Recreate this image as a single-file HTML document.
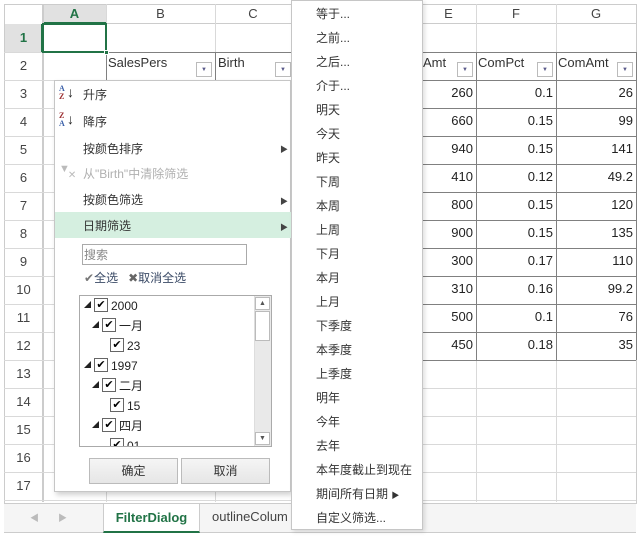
<!DOCTYPE html>
<html><head><meta charset="utf-8"><style>
*{box-sizing:border-box;margin:0;padding:0}
body{width:642px;height:536px;overflow:hidden;background:#fff;position:relative;font-family:"Segoe UI","Liberation Sans","Noto Sans CJK SC",sans-serif;font-size:13px;color:#333}
.a{position:absolute}
.hl{position:absolute;height:1px;background:#d9d9d9}
.vl{position:absolute;width:1px;background:#d9d9d9}
.rh{position:absolute;left:4px;width:39px;text-align:center;font-size:13px;color:#444}
.ch{position:absolute;top:4px;height:20px;text-align:center;line-height:20px;color:#444}
.num{position:absolute;text-align:right;font-size:13px;color:#222}
.fb{position:absolute;width:16px;height:15px;border:1px solid #bbb;background:#fff;font-size:6px;color:#5a5a8a;text-align:center;line-height:14px}
.mi{position:absolute;left:83px;font-size:12px;color:#333}
.arr{position:absolute;left:280px;font-size:8px;color:#444}
.si{position:absolute;left:316px;font-size:12px;color:#333}
.cb{display:inline-block;width:14px;height:14px;border:1px solid #666;background:#fff;font-size:11px;line-height:12px;text-align:center;vertical-align:top;margin-right:3px;color:#000}
.tr{position:absolute;font-size:12px;line-height:16px;height:16px;color:#222;white-space:nowrap}
.tri{display:inline-block;font-size:7px;width:10px;color:#222;vertical-align:top;line-height:16px}
</style></head><body>
<div class="a" style="left:4px;top:4px;width:632px;height:20px;background:#fff;border-bottom:1px solid #ccc"></div>
<div class="a" style="left:4px;top:4px;width:39px;height:498px;background:#fff;border-right:1px solid #ccc"></div>
<div class="a" style="left:43px;top:4px;width:63px;height:20px;background:#e1e1e1;border-bottom:2px solid #217346"></div>
<div class="a" style="left:4px;top:24px;width:39px;height:28px;background:#e1e1e1;border-right:2px solid #217346"></div>
<div class="a" style="left:4px;top:4px;width:632px;height:1px;background:#ccc"></div>
<div class="a" style="left:4px;top:4px;width:1px;height:500px;background:#ccc"></div>
<div class="a" style="left:636px;top:4px;width:1px;height:500px;background:#ccc"></div>
<div class="ch" style="left:43px;width:63px;color:#217346;font-weight:bold">A</div>
<div class="ch" style="left:106px;width:109px">B</div>
<div class="ch" style="left:215px;width:76px">C</div>
<div class="ch" style="left:421px;width:55px">E</div>
<div class="ch" style="left:476px;width:80px">F</div>
<div class="ch" style="left:556px;width:80px">G</div>
<div class="vl" style="left:43px;top:4px;height:498px;background:#ccc"></div>
<div class="vl" style="left:106px;top:4px;height:498px"></div>
<div class="vl" style="left:215px;top:4px;height:498px"></div>
<div class="vl" style="left:476px;top:4px;height:498px"></div>
<div class="vl" style="left:556px;top:4px;height:498px"></div>
<div class="vl" style="left:421px;top:4px;height:498px"></div>
<div id="rows"></div>
<script>
var h='';for(var i=1;i<=17;i++){var t=24+(i-1)*28;h+='<div class="hl" style="left:4px;width:632px;top:'+(t+28)+'px"></div><div class="rh" style="top:'+(t+6)+'px;'+(i==1?'color:#217346;font-weight:bold':'')+'">'+i+'</div>';}
document.getElementById('rows').outerHTML=h;
</script>
<div class="a" style="left:106px;top:52px;width:530px;height:1px;background:#808080"></div>
<div class="a" style="left:106px;top:80px;width:530px;height:1px;background:#808080"></div>
<div class="a" style="left:106px;top:52px;width:1px;height:28px;background:#808080"></div>
<div class="a" style="left:215px;top:52px;width:1px;height:28px;background:#808080"></div>
<div class="a" style="left:421px;top:52px;width:1px;height:308px;background:#808080"></div>
<div class="a" style="left:476px;top:52px;width:1px;height:308px;background:#808080"></div>
<div class="a" style="left:556px;top:52px;width:1px;height:308px;background:#808080"></div>
<div class="a" style="left:636px;top:52px;width:1px;height:308px;background:#808080"></div>
<div id="tb"></div>
<script>
var d=[[260,'0.1',26],[660,'0.15',99],[940,'0.15',141],[410,'0.12','49.2'],[800,'0.15',120],[900,'0.15',135],[300,'0.17',110],[310,'0.16','99.2'],[500,'0.1',76],[450,'0.18',35]];
var s='';for(var i=0;i<10;i++){var t=80+i*28;s+='<div class="a" style="left:421px;top:'+(t+28)+'px;width:215px;height:1px;background:#808080"></div>';
s+='<div class="num" style="left:421px;width:52px;top:'+(t+5)+'px">'+d[i][0]+'</div><div class="num" style="left:476px;width:77px;top:'+(t+5)+'px">'+d[i][1]+'</div><div class="num" style="left:556px;width:77px;top:'+(t+5)+'px">'+d[i][2]+'</div>';}
document.getElementById('tb').outerHTML=s;
</script>
<div class="a" style="left:108px;top:55px">SalesPers</div>
<div class="fb" style="left:196px;top:62px">▼</div>
<div class="a" style="left:218px;top:55px">Birth</div>
<div class="fb" style="left:275px;top:62px">▼</div>
<div class="a" style="left:423px;top:55px">Amt</div>
<div class="fb" style="left:457px;top:62px">▼</div>
<div class="a" style="left:478px;top:55px">ComPct</div>
<div class="fb" style="left:537px;top:62px">▼</div>
<div class="a" style="left:558px;top:55px">ComAmt</div>
<div class="fb" style="left:617px;top:62px">▼</div>
<div class="a" style="left:42px;top:23px;width:65px;height:30px;border:2px solid #217346"></div>
<div class="a" style="left:104px;top:50px;width:5px;height:5px;background:#217346;border:1px solid #fff"></div>
<div class="a" style="left:4px;top:503px;width:632px;height:30px;background:#f5f5f5;border-top:1px solid #ccc;border-bottom:1px solid #ccc"></div>
<div class="a" style="left:30px;top:511px;font-size:9px;color:#bbb">◀</div>
<div class="a" style="left:58px;top:511px;font-size:9px;color:#bbb">▶</div>
<div class="a" style="left:103px;top:504px;width:97px;height:29px;background:#fff;border-left:1px solid #ccc;border-right:1px solid #ccc;border-bottom:2px solid #217346;text-align:center;line-height:27px;font-weight:bold;color:#217346;font-size:13px">FilterDialog</div>
<div class="a" style="left:212px;top:509px;font-size:13px;color:#444">outlineColum</div>
<div class="a" style="left:54px;top:80px;width:237px;height:412px;background:#fff;border:1px solid #c6c6c6;box-shadow:2px 3px 5px rgba(0,0,0,.18)"></div>
<div class="a" style="left:55px;top:212px;width:236px;height:26px;background:#d5efe0"></div>
<div class="a" style="left:59px;top:85px;font:bold 8px/8px 'Liberation Serif',serif;color:#3a5fa8">A<br><span style="color:#9b2d30">Z</span></div>
<div class="a" style="left:67px;top:84px;font-size:14px;color:#222">↓</div>
<div class="a" style="left:59px;top:112px;font:bold 8px/8px 'Liberation Serif',serif;color:#9b2d30">Z<br><span style="color:#3a5fa8">A</span></div>
<div class="a" style="left:67px;top:111px;font-size:14px;color:#222">↓</div>
<div class="a" style="left:59px;top:163px;font-size:11px;color:#bbb">▼<span style="font-size:10px;position:relative;top:6px;left:-2px">✕</span></div>
<div class="mi" style="top:86px">升序</div>
<div class="mi" style="top:113px">降序</div>
<div class="mi" style="top:140px">按颜色排序</div>
<div class="arr" style="top:144px">▶</div>
<div class="mi" style="top:165px;color:#b0b0b0">从"Birth"中清除筛选</div>
<div class="mi" style="top:191px">按颜色筛选</div>
<div class="arr" style="top:196px">▶</div>
<div class="mi" style="top:217px">日期筛选</div>
<div class="arr" style="top:222px">▶</div>
<div class="a" style="left:82px;top:244px;width:165px;height:21px;border:1px solid #aaa;font-size:12px;color:#888;padding:1px 1px">搜索</div>
<div class="a" style="left:84px;top:269px;font-size:12px;color:#3a4a66"><span style="color:#777">✔</span>全选 &nbsp;&nbsp;<span style="color:#666">✖</span>取消全选</div>
<div class="a" style="left:79px;top:295px;width:193px;height:152px;border:1px solid #aaa;background:#fff;overflow:hidden">
 <div class="a" style="right:0;top:0;width:17px;height:150px;background:#e9e9e9;border-left:1px solid #ddd"></div>
 <div class="a" style="right:1px;top:1px;width:15px;height:13px;background:#fff;border:1px solid #bbb;font-size:7px;text-align:center;line-height:11px;color:#555">▲</div>
 <div class="a" style="right:1px;top:15px;width:15px;height:30px;background:#fff;border:1px solid #bbb"></div>
 <div class="a" style="right:1px;bottom:1px;width:15px;height:13px;background:#fff;border:1px solid #bbb;font-size:7px;text-align:center;line-height:11px;color:#555">▼</div>
 <div class="tr" style="left:4px;top:2px"><span class="tri">◢</span><span class="cb">✔</span>2000</div>
 <div class="tr" style="left:12px;top:22px"><span class="tri">◢</span><span class="cb">✔</span>一月</div>
 <div class="tr" style="left:30px;top:42px"><span class="cb">✔</span>23</div>
 <div class="tr" style="left:4px;top:62px"><span class="tri">◢</span><span class="cb">✔</span>1997</div>
 <div class="tr" style="left:12px;top:82px"><span class="tri">◢</span><span class="cb">✔</span>二月</div>
 <div class="tr" style="left:30px;top:102px"><span class="cb">✔</span>15</div>
 <div class="tr" style="left:12px;top:122px"><span class="tri">◢</span><span class="cb">✔</span>四月</div>
 <div class="tr" style="left:30px;top:142px"><span class="cb">✔</span>01</div>
</div>
<div class="a" style="left:89px;top:458px;width:89px;height:26px;border:1px solid #bbb;background:linear-gradient(#f5f5f5,#e6e6e6);text-align:center;line-height:24px;font-size:12px">确定</div>
<div class="a" style="left:181px;top:458px;width:89px;height:26px;border:1px solid #bbb;background:linear-gradient(#f5f5f5,#e6e6e6);text-align:center;line-height:24px;font-size:12px">取消</div>
<div class="a" style="left:291px;top:0;width:132px;height:530px;background:#fff;border:1px solid #c6c6c6;box-shadow:2px 2px 4px rgba(0,0,0,.12)"></div>
<div id="sm"></div>
<script>
var it=['等于...','之前...','之后...','介于...','明天','今天','昨天','下周','本周','上周','下月','本月','上月','下季度','本季度','上季度','明年','今年','去年','本年度截止到现在','期间所有日期 <span style="font-size:8px">▶</span>','自定义筛选...'];
var q='';for(var i=0;i<it.length;i++)q+='<div class="si" style="top:'+(5+i*24)+'px">'+it[i]+'</div>';
document.getElementById('sm').outerHTML=q;
</script>
</body></html>
